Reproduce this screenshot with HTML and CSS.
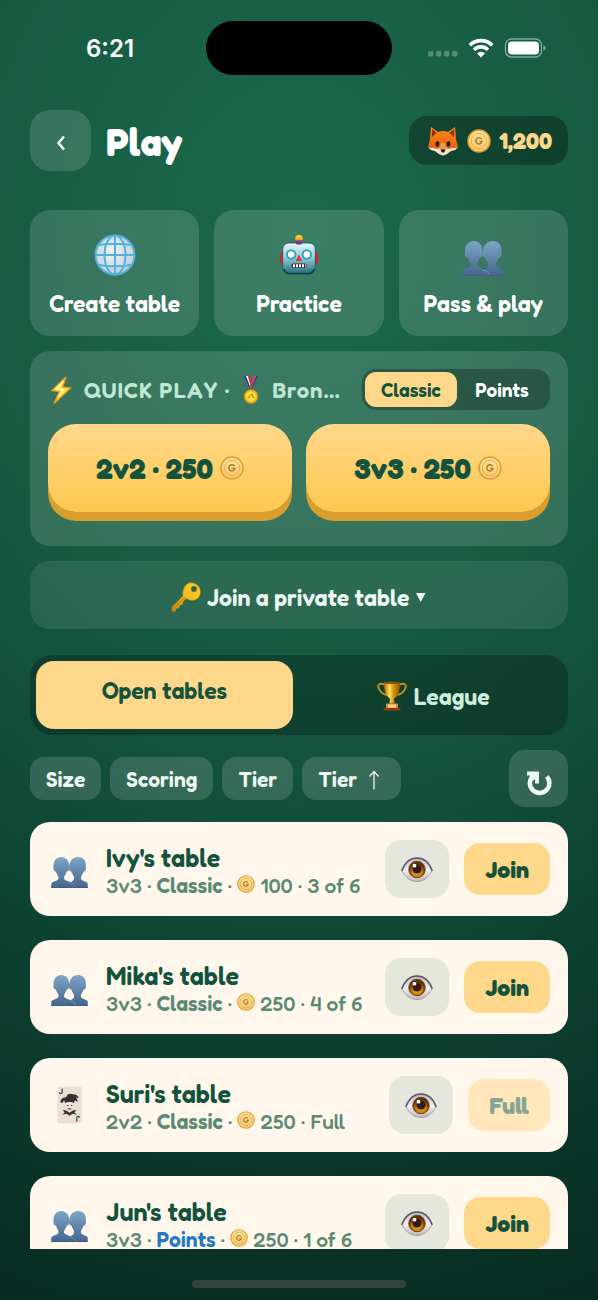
FILE: index.html
```html
<!DOCTYPE html>
<html lang="en">
<head>
<meta charset="utf-8">
<meta name="viewport" content="width=device-width, initial-scale=1">
<title>Play</title>
<link rel="stylesheet" href="styles.css">
</head>
<body>
<svg class="sprite" aria-hidden="true">
  <defs>
    <linearGradient id="gBust" x1="0" y1="0" x2="0" y2="1"><stop offset="0" stop-color="#7ea6c8"/><stop offset="1" stop-color="#44648c"/></linearGradient>
    <linearGradient id="gCoin" x1="0" y1="0" x2="0" y2="1"><stop offset="0" stop-color="#ffe39a"/><stop offset="1" stop-color="#f7c768"/></linearGradient>
    <linearGradient id="gRobot" x1="0" y1="0" x2="0" y2="1"><stop offset="0" stop-color="#e4f7f7"/><stop offset=".45" stop-color="#9fcdd4"/><stop offset="1" stop-color="#1c6b7c"/></linearGradient>
    <linearGradient id="gKnob" x1="0" y1="0" x2="0" y2="1"><stop offset="0" stop-color="#ffe23a"/><stop offset=".5" stop-color="#f59a1b"/><stop offset=".6" stop-color="#7d4a9c"/><stop offset="1" stop-color="#54347c"/></linearGradient>
    <linearGradient id="gFox" x1="0" y1="0" x2="0" y2="1"><stop offset="0" stop-color="#ff8a1c"/><stop offset="1" stop-color="#dc5408"/></linearGradient>
    <linearGradient id="gKey" x1="0" y1="1" x2="1" y2="0"><stop offset="0" stop-color="#c98a12"/><stop offset=".5" stop-color="#f0bb1c"/><stop offset="1" stop-color="#fbd732"/></linearGradient>
    <linearGradient id="gCup" x1="0" y1="0" x2="1" y2="0"><stop offset="0" stop-color="#a86400"/><stop offset=".35" stop-color="#ffdf55"/><stop offset=".6" stop-color="#d89310"/><stop offset="1" stop-color="#8f5200"/></linearGradient>
    <linearGradient id="gEye" x1="0" y1="0" x2="0" y2="1"><stop offset="0" stop-color="#b9b3c2"/><stop offset=".5" stop-color="#f4f0f5"/><stop offset="1" stop-color="#c4b3b9"/></linearGradient>
    <radialGradient id="gIris" cx=".5" cy=".65"><stop offset="0" stop-color="#f2b21b"/><stop offset=".6" stop-color="#c98206"/><stop offset="1" stop-color="#5c3305"/></radialGradient>
    <radialGradient id="gGlobe" cx=".45" cy=".4"><stop offset="0" stop-color="#f2f4f4"/><stop offset="1" stop-color="#c6d6dc"/></radialGradient>
  </defs>
  <symbol id="coin" viewBox="0 0 24 24">
    <circle cx="12" cy="12" r="11" fill="url(#gCoin)" stroke="#dc9f2f" stroke-width="1.5"/>
    <circle cx="12" cy="12" r="7.7" fill="none" stroke="#dfae55" stroke-width="1"/>
    <path d="M14.6 10.2A3.100 3.100 0 1 0 15 12.400H12.400" fill="none" stroke="#a97a28" stroke-width="1.500"/>
  </symbol>
  <symbol id="busts" viewBox="0 0 40 34">
    <g fill="url(#gBust)">
      <path d="M0 34v-4.500c0-3 8-2.500 8-6.500 0-2-2-4-3-7C3 16 2 14 2.500 11 2 4 6 0 11 0s9 4 8.500 11c.5 3-.5 5-2.500 5-1 3-3 5-3 7 0 4 9 3.500 9 6.500V34z"/>
      <path d="M17 34v-4.500c3-2 8-2.500 8-6.500 0-2-2-4-3-7-2 0-3-2-2.500-5C20 4 24 0 29.500 0s9 4 8.500 11c.5 3-.5 5-2.500 5-1 3-3 5-3 7 0 4 7.500 3.500 7.500 6.500V34z"/>
    </g>
    <path d="M20 28.500c4 0 6 2.500 6.500 5" fill="none" stroke="#6fa3d0" stroke-width=".8"/>
    <path d="M0 33.500h40" stroke="#3e5d87"/>
  </symbol>
  <symbol id="eye" viewBox="0 0 32 25">
    <path d="M1 14C5 5 10 1 16 1s11 4 15 13c-4 7-9 10.500-15 10.500S5 21 1 14z" fill="url(#gEye)" stroke="#9b8b98" stroke-width=".8"/>
    <path d="M.7 14C4 5 10 1 16 1s12 4 15.300 13" fill="none" stroke="#5d5a68" stroke-width="1.500"/>
    <circle cx="16" cy="12.500" r="8.200" fill="url(#gIris)" stroke="#6b4118"/>
    <circle cx="16" cy="12" r="4.600" fill="#35191a"/>
    <circle cx="13.500" cy="8.700" r="1.900" fill="#fff"/>
  </symbol>
</svg>

<div class="screen">
  <div class="status">
    <span class="time">6:21</span>
    <span class="island"></span>
    <span class="signals">
      <svg width="30" height="20" viewBox="0 0 30 20" fill="#5b8a75" aria-hidden="true"><rect x="0" y="13" width="5.500" height="5.500" rx="1.800"/><rect x="8" y="13" width="5.500" height="5.500" rx="1.800"/><rect x="16" y="13" width="5.500" height="5.500" rx="1.800"/><rect x="24" y="13" width="5.500" height="5.500" rx="1.800"/></svg>
      <svg width="26" height="20" viewBox="0 0 26 20" fill="none" stroke="#fff" stroke-width="3.600" aria-hidden="true"><path d="M1.800 7.200a16 16 0 0 1 22.400 0M6 11.700a10 10 0 0 1 14 0"/><path d="M13 19.500l-4-4.200a5.800 5.800 0 0 1 8 0z" fill="#fff" stroke="none"/></svg>
      <svg width="42" height="20" viewBox="0 0 42 20" aria-hidden="true"><rect x="1.500" y="1" width="36" height="18" rx="6" fill="none" stroke="#86aa9b" stroke-width="1.300"/><rect x="4" y="3.500" width="31" height="13" rx="4" fill="#fff"/><path d="M39.500 7v6q2-1 2-3t-2-3z" fill="#86aa9b"/></svg>
    </span>
  </div>

  <header class="topbar">
    <button class="back" type="button" aria-label="Back"><svg width="10" height="16" viewBox="0 0 10 16" fill="none" stroke="#fff" stroke-width="2.400" aria-hidden="true"><path d="M8 1.500L2.500 8 8 14.500"/></svg></button>
    <h1>Play</h1>
    <div class="balance">
      <svg width="32" height="30" viewBox="0 0 32 30" aria-hidden="true">
        <path d="M4 1l7 5q5-2 10 0l7-5 1 12 2 8-3 1v2l-4 1-4 3-4 1.500L12 28l-4-3-4-1v-2l-3-1 2-8z" fill="url(#gFox)"/>
        <path d="M5 3l4.500 4L5 11zM27 3l-4.500 4 4.500 4z" fill="#8a3208"/>
        <path d="M1 21.500q6 0 10 1.500l5-4 5 4q4-1.500 10-1.500l-3 2.500-4 1-4 3-4 1.500L12 28l-4-3-4-1z" fill="#f2e3cf"/>
        <path d="M12.500 22.500q1-6 3.500-6t3.500 6l-3.500 4z" fill="#f29a4e"/>
        <ellipse cx="10.500" cy="18" rx="1.900" ry="2.800" fill="#2b1710"/><ellipse cx="21.500" cy="18" rx="1.900" ry="2.800" fill="#2b1710"/>
        <path d="M13.500 23.500h5l-1.500 3h-2z" fill="#1c1210"/>
      </svg>
      <svg class="coin-lg" aria-hidden="true"><use href="#coin"/></svg>
      <span>1,200</span>
    </div>
  </header>

  <main class="content">
    <div class="modes">
      <button type="button" class="mode">
        <svg width="42" height="42" viewBox="0 0 42 42" aria-hidden="true"><circle cx="21" cy="21" r="19.500" fill="url(#gGlobe)"/><g fill="none" stroke="#54b0dc" stroke-width="2"><circle cx="21" cy="21" r="19.500"/><ellipse cx="21" cy="21" rx="10.500" ry="19.500"/><path d="M21 1.500v39M1.500 21h39M5 11q16-2.500 32 0M5 31q16 2.500 32 0"/></g></svg>
        Create table
      </button>
      <button type="button" class="mode">
        <svg width="42" height="42" viewBox="0 0 42 42" aria-hidden="true">
          <rect x="2" y="18" width="5" height="12" rx="2" fill="#c92a30"/><rect x="35" y="18" width="5" height="12" rx="2" fill="#c92a30"/>
          <rect x="4.700" y="9" width="32.600" height="31" rx="6" fill="url(#gRobot)" stroke="#174f60" stroke-width=".8"/>
          <path d="M6 35q1 4.500 6 4.500h18q5 0 6-4.500" fill="none" stroke="#0d4252" stroke-width="1.500"/>
          <rect x="17.200" y="1" width="7.600" height="9.500" rx="3.600" fill="url(#gKnob)"/>
          <g fill="#fff" stroke="#27a5c9" stroke-width="2"><circle cx="13.200" cy="20.500" r="4.200"/><circle cx="28.800" cy="20.500" r="4.200"/></g>
          <path d="M21 20.500l3.200 6.500h-6.400z" fill="#df343c"/>
          <rect x="13.500" y="29.500" width="15" height="4.500" rx="2" fill="#3d2f33"/>
          <path d="M15 31.700h12.500" stroke="#fff" stroke-width="3" stroke-dasharray="2 1"/>
        </svg>
        Practice
      </button>
      <button type="button" class="mode">
        <svg class="mode-busts" aria-hidden="true"><use href="#busts"/></svg>
        Pass &amp; play
      </button>
    </div>

    <section class="quick">
      <div class="quick-head">
        <h2>
          <svg width="22" height="28" viewBox="0 0 22 28" aria-hidden="true"><path d="M16 1L2 14.500l7.500 1L4 27.500 20.500 12l-8-1z" fill="#fff04f" stroke="#ef9b16" stroke-width="1.500"/><path d="M13.500 5L5.500 13.200l6.500.8-3 7" fill="none" stroke="#fff9c9" stroke-width="1.300"/></svg>
          <span>QUICK PLAY ·</span>
          <svg width="18" height="28" viewBox="0 0 18 28" aria-hidden="true"><path d="M2 0h4l5 12-3 1zM16 0h-4L7 12l3 1z" fill="#263a9c"/><path d="M4 0h2l4 11-1 2zM14 0h-2l-4 11 1 2z" fill="#fff"/><path d="M6 0h2.500l1 9L9 12zM12 0h2L10 12 9 9z" fill="#d3293c"/><circle cx="9" cy="20.500" r="7" fill="#edb71b" stroke="#b78105" stroke-width=".8"/><circle cx="9" cy="20.500" r="5" fill="#ffde45"/><path d="M6 22l4-4 1 3 2 1" fill="none" stroke="#c08b09" stroke-width="1.200"/></svg>
          <span>Bron…</span>
        </h2>
        <div class="toggle">
          <button type="button" class="on" aria-pressed="true">Classic</button>
          <button type="button" aria-pressed="false">Points</button>
        </div>
      </div>
      <div class="quick-buttons">
        <button type="button">2v2 · 250 <svg class="coin-lg" aria-hidden="true"><use href="#coin"/></svg></button>
        <button type="button">3v3 · 250 <svg class="coin-lg" aria-hidden="true"><use href="#coin"/></svg></button>
      </div>
    </section>

    <button type="button" class="private">
      <svg width="30" height="30" viewBox="0 0 30 30" aria-hidden="true"><path d="M12 14L1 25v4l3.500.5.500-3 3-.5.500-3 3-.5.500-3 3-3 2 1c6 3 12-1 12.500-7S24 0 19 .8 11 8 12 14z" fill="url(#gKey)" stroke="#b57f0c" stroke-width=".7"/><circle cx="23" cy="7" r="2.900" fill="#27644c" stroke="#a9780c" stroke-width=".8"/><path d="M2.500 26.500L14 15" stroke="#a8750d" fill="none"/></svg>
      <span>Join a private table</span>
      <svg width="12" height="12" viewBox="0 0 12 12" aria-hidden="true"><path d="M1 2h9.500L5.750 11z" fill="#ecf8f1"/></svg>
    </button>

    <div class="tabs">
      <button type="button" class="tab on">Open tables</button>
      <button type="button" class="tab">
        <svg width="30" height="30" viewBox="0 0 30 30" aria-hidden="true"><path d="M8 4C2 1 0 4 2 8s5 6 9 6M22 4c6-3 8 0 6 4s-5 6-9 6" fill="none" stroke="#cf8a13" stroke-width="1.800"/><path d="M7 1.500h16c0 9-2 14-6 16l.5 5h-5l.500-5c-4-2-6-7-6-16z" fill="url(#gCup)"/><ellipse cx="15" cy="1.800" rx="8" ry="1.300" fill="#8a5206"/><path d="M9 22.500h12v5H9z" fill="#d98a3c"/><path d="M11 23.500h8v3h-8z" fill="#ffd38a"/><path d="M6.500 27h17v2.500h-17z" fill="#8c3d0c"/></svg>
        League
      </button>
    </div>

    <div class="filters">
      <button type="button" class="chip">Size</button>
      <button type="button" class="chip">Scoring</button>
      <button type="button" class="chip">Tier</button>
      <button type="button" class="chip">Tier <svg width="18" height="20" viewBox="0 0 18 20" fill="none" stroke="#ecf8f1" stroke-width="1.300" aria-hidden="true"><path d="M7 19.500V1.500M2.500 6.500L7 1.500l4.500 5"/></svg></button>
      <button type="button" class="refresh" aria-label="Refresh"><svg width="26" height="26" viewBox="0 0 26 26" aria-hidden="true"><path d="M4.500 9.500A9.800 9.800 0 1 0 20.800 6.500" fill="none" stroke="#ecf8f1" stroke-width="4.600"/><path d="M1 1.500h12V13.500H9V9L5 12.500 2.500 9 4 5.500H1z" fill="#ecf8f1"/></svg></button>
    </div>

    <ul class="tables">
      <li class="row">
        <svg class="row-icon" aria-hidden="true"><use href="#busts"/></svg>
        <div class="info"><h3>Ivy's table</h3><p>3v3 · <b>Classic</b> · <svg class="coin-sm" aria-hidden="true"><use href="#coin"/></svg> 100 · 3 of 6</p></div>
        <button type="button" class="watch" aria-label="Watch"><svg aria-hidden="true"><use href="#eye"/></svg></button>
        <button type="button" class="join">Join</button>
      </li>
      <li class="row">
        <svg class="row-icon" aria-hidden="true"><use href="#busts"/></svg>
        <div class="info"><h3>Mika's table</h3><p>3v3 · <b>Classic</b> · <svg class="coin-sm" aria-hidden="true"><use href="#coin"/></svg> 250 · 4 of 6</p></div>
        <button type="button" class="watch" aria-label="Watch"><svg aria-hidden="true"><use href="#eye"/></svg></button>
        <button type="button" class="join">Join</button>
      </li>
      <li class="row">
        <svg class="row-icon joker" viewBox="0 0 38 38" aria-hidden="true">
          <rect x="6.500" y="0" width="25" height="38" rx="2.500" fill="#e9e0d5"/>
          <path d="M11.500 2v4.500q-2 2-3-.5M26.500 36v-4.500q2-2 3 .5" fill="none" stroke="#3b3735" stroke-width="1.200"/>
          <path d="M9.500 16q1-5 6-5 2-5 7-3 5 0 6 4l-3-1q2 2 2 5l-3-2-1 3q-4-2-9 0l-1-3-2 3z" fill="#332f2e"/>
          <path d="M15 17q4-2 8 0l-1 7-3 2-3-2z" fill="#f3e3d8"/><path d="M16.500 19.500h1.500M20.500 19.500h1.500" stroke="#332f2e"/><path d="M17 23h4" stroke="#cf4944" stroke-width="1.500"/>
          <path d="M12 24l4 1 3 2 3-2 4-1-2 3 3 2-5-1-3 2-3-2-5 1 3-2z" fill="#332f2e"/>
        </svg>
        <div class="info"><h3>Suri's table</h3><p>2v2 · <b>Classic</b> · <svg class="coin-sm" aria-hidden="true"><use href="#coin"/></svg> 250 · Full</p></div>
        <button type="button" class="watch" aria-label="Watch"><svg aria-hidden="true"><use href="#eye"/></svg></button>
        <button type="button" class="join" disabled>Full</button>
      </li>
      <li class="row">
        <svg class="row-icon" aria-hidden="true"><use href="#busts"/></svg>
        <div class="info"><h3>Jun's table</h3><p>3v3 · <b class="points">Points</b> · <svg class="coin-sm" aria-hidden="true"><use href="#coin"/></svg> 250 · 1 of 6</p></div>
        <button type="button" class="watch" aria-label="Watch"><svg aria-hidden="true"><use href="#eye"/></svg></button>
        <button type="button" class="join">Join</button>
      </li>
    </ul>
  </main>
  <div class="home"><span></span></div>
</div>
</body>
</html>
```

FILE: styles.css
```css
* { box-sizing: border-box; }

body {
  margin: 0;
  font-family: Fredoka, Lato, sans-serif;
  color: #fff;
  background: #082b21;
}

button {
  margin: 0;
  padding: 0;
  border: 0;
  font: inherit;
  color: inherit;
  background: none;
  cursor: pointer;
}

h1, h2, h3, p, ul { margin: 0; padding: 0; }
svg { display: block; flex: none; }
.sprite { position: absolute; width: 0; height: 0; }

.screen {
  height: 100vh;
  display: flex;
  flex-direction: column;
  background: radial-gradient(160% 90% at 50% 18%, #1c6a4c 0%, #165a42 35%, #124f3a 50%, #0d4231 65%, #082c22 95%);
}

/* Status bar */
.status {
  display: grid;
  grid-template-columns: 1fr 186px 1fr;
  align-items: center;
  padding: 21px 0 35px;
}
.time {
  padding: 2px 0 0 14px;
  text-align: center;
  font: 600 24px/28px Inter, sans-serif;
}
.island { height: 54px; border-radius: 27px; background: #000; }
.signals {
  display: flex;
  justify-content: center;
  gap: 10px;
  padding-right: 16px;
}

/* Header */
.topbar {
  display: flex;
  align-items: center;
  gap: 15px;
  padding: 0 30px;
}
.back {
  width: 61px;
  height: 61px;
  display: grid;
  place-items: center;
  padding-top: 4px;
  border-radius: 20px;
  background: rgba(255, 255, 255, .14);
}
h1 { flex: 1; padding-top: 2px; font-size: 38px; line-height: 46px; font-weight: 700; }
.balance {
  height: 49px;
  display: flex;
  align-items: center;
  gap: 8px;
  padding: 0 16px 0 18px;
  border-radius: 18px;
  background: rgba(0, 0, 0, .3);
  color: #fed88a;
  font-size: 23px;
  font-weight: 700;
}
.coin-lg { width: 24px; height: 24px; }
.coin-sm { width: 18px; height: 18px; display: inline-block; vertical-align: 0; }

.content {
  flex: 1;
  min-height: 0;
  display: flex;
  flex-direction: column;
  gap: 15px;
  padding: 39px 30px 0;
}

/* Mode cards */
.modes { display: grid; grid-template-columns: repeat(3, 1fr); gap: 15px; }
.mode {
  height: 126px;
  display: flex;
  flex-direction: column;
  align-items: center;
  justify-content: space-between;
  padding: 24px 8px 18px;
  border-radius: 20px;
  background: rgba(255, 255, 255, .14);
  font-size: 23px;
  line-height: 28px;
  font-weight: 600;
}
.mode-busts { width: 42px; height: 42px; padding-top: 7px; }

/* Quick play */
.quick {
  padding: 18px 18px 34px;
  border-radius: 20px;
  background: rgba(255, 255, 255, .14);
}
.quick-head { display: flex; align-items: center; justify-content: space-between; }
h2 {
  display: flex;
  align-items: center;
  gap: 12px;
  padding-left: 2px;
  color: #bfe8d2;
  font-size: 22px;
  line-height: 28px;
  font-weight: 600;
  letter-spacing: 1px;
  white-space: nowrap;
}
.toggle {
  display: flex;
  padding: 3px;
  border-radius: 14px;
  background: rgba(0, 0, 0, .26);
  font-size: 19px;
  font-weight: 600;
}
.toggle button { width: 90px; height: 35px; border-radius: 11px; }
.toggle .on { width: 92px; color: #13523d; background: #fed88a; }
.quick-buttons { display: grid; grid-template-columns: 1fr 1fr; gap: 14px; margin-top: 14px; }
.quick-buttons button {
  height: 88px;
  display: flex;
  align-items: center;
  justify-content: center;
  gap: 7px;
  border-radius: 28px;
  background: linear-gradient(#fed88a, #ffc84f);
  box-shadow: 0 9px 0 #d99e2b;
  color: #13523d;
  font-size: 29px;
  font-weight: 700;
}

/* Private table */
.private {
  min-height: 68px;
  display: flex;
  align-items: center;
  justify-content: center;
  gap: 6px;
  padding-top: 4px;
  border-radius: 20px;
  background: rgba(255, 255, 255, .09);
  color: #ecf8f1;
  font-size: 23px;
  font-weight: 600;
}

/* Tabs */
.tabs {
  display: grid;
  grid-template-columns: 1fr 1fr;
  gap: 12px;
  margin-top: 11px;
  padding: 6px;
  border-radius: 22px;
  background: rgba(0, 0, 0, .24);
}
.tab {
  height: 68px;
  display: flex;
  align-items: center;
  justify-content: center;
  gap: 6px;
  padding-top: 2px;
  border-radius: 18px;
  color: #cdeedd;
  font-size: 23px;
  font-weight: 600;
}
.tab.on { padding: 0 0 9px; color: #13523d; background: #fed88a; }

/* Filters */
.filters { display: flex; align-items: center; gap: 9px; }
.chip {
  height: 43px;
  display: flex;
  align-items: center;
  gap: 10px;
  padding: 2px 16px 0;
  border-radius: 14px;
  background: rgba(255, 255, 255, .15);
  color: #ecf8f1;
  font-size: 21px;
  font-weight: 600;
}
.refresh {
  width: 59px;
  height: 57px;
  display: grid;
  place-items: center;
  margin-left: auto;
  padding-top: 8px;
  border-radius: 16px;
  background: rgba(255, 255, 255, .15);
}

/* Open tables */
.tables {
  flex: 1;
  min-height: 0;
  display: flex;
  flex-direction: column;
  gap: 24px;
  overflow: hidden;
  list-style: none;
}
.row {
  flex: none;
  height: 94px;
  display: flex;
  align-items: center;
  gap: 15px;
  padding: 0 18px;
  border-radius: 20px;
  background: #fff7ec;
}
.row-icon { width: 43px; height: 38px; padding: 7px 3px 0; }
.row-icon.joker { padding: 0 3px; }
.info { flex: 1; min-width: 0; padding-top: 4px; }
h3 { color: #13523d; font-size: 25px; line-height: 28px; font-weight: 600; }
.info p { color: #5b8a74; font-size: 21px; line-height: 27px; font-weight: 500; white-space: nowrap; }
.info b { font-weight: 600; }
.info .points { color: #2779c4; }
.watch {
  width: 64px;
  height: 58px;
  display: grid;
  place-items: center;
  border-radius: 16px;
  background: #e5e7dc;
}
.watch svg { width: 32px; height: 25px; }
.join {
  height: 52px;
  padding: 0 21px;
  border-radius: 16px;
  background: #fed88a;
  color: #13523d;
  font-size: 23px;
  font-weight: 700;
}
.join:disabled { color: #84a595; background: #ffe7bb; }

/* Home indicator */
.home { display: flex; justify-content: center; padding: 31px 0 12px; }
.home span { width: 214px; height: 8px; border-radius: 4px; background: #30443d; }
```
